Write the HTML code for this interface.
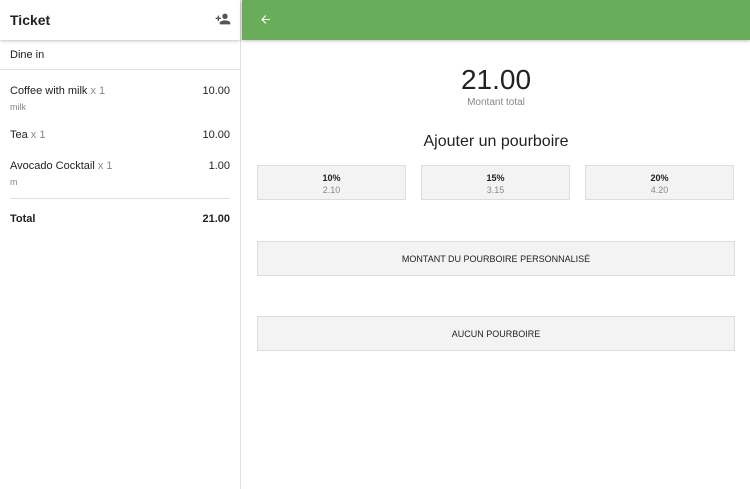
<!DOCTYPE html>
<html><head><meta charset="utf-8"><style>
*{margin:0;padding:0;box-sizing:border-box}
body{width:750px;height:489px;overflow:hidden;font-family:"Liberation Sans",sans-serif;background:#fff;position:relative;color:#222}
.left{position:absolute;left:0;top:0;width:241px;height:489px;border-right:1px solid #e0e0e0;background:#fff}
.lh{height:40px;position:relative;box-shadow:0 1px 3px rgba(0,0,0,.25);z-index:2}
.lh .t{position:absolute;left:10px;top:12px;font-size:14px;font-weight:bold;color:#222}
.dine{height:30px;border-bottom:1px solid #e0e0e0;font-size:11px;padding:9px 10px}
.it{position:absolute;left:10px;right:10px;font-size:11px}
.it .p{position:absolute;right:0;top:0}
.g{color:#888}
.s{color:#888;font-size:9px;margin-top:5px}
.green{position:absolute;left:242px;top:0;right:0;height:40px;background:#69ad5a;box-shadow:0 1px 3px rgba(0,0,0,.25)}
.c{position:absolute;text-align:center;left:242px;right:0}
.b{position:absolute;background:#f3f3f3;border:1px solid #ddd;text-align:center;font-size:9px;color:#222}
</style></head><body>
<div class="left">
<div class="lh"><span class="t">Ticket</span>
<svg style="position:absolute;left:215px;top:12px" width="16" height="14" viewBox="0 0 24 20"><path fill="#555" d="M15 10c2.2 0 4-1.8 4-4s-1.8-4-4-4-4 1.8-4 4 1.8 4 4 4zM6 8V5H4v3H1v2h3v3h2v-3h3V8H6zm9 4c-2.7 0-8 1.3-8 4v2h16v-2c0-2.7-5.3-4-8-4z"/></svg></div>
<div class="dine">Dine in</div>
<div class="it" style="top:85px">Coffee with milk <span class="g">x 1</span><span class="p">10.00</span><div class="s">milk</div></div>
<div class="it" style="top:129px">Tea <span class="g">x 1</span><span class="p">10.00</span></div>
<div class="it" style="top:160px">Avocado Cocktail <span class="g">x 1</span><span class="p">1.00</span><div class="s">m</div></div>
<div style="position:absolute;left:10px;right:10px;top:198px;border-top:1px solid #e0e0e0"></div>
<div class="it" style="top:213px;font-weight:bold;font-size:11px">Total<span class="p">21.00</span></div>
</div>
<div class="green"><svg style="position:absolute;left:17px;top:13px" width="13" height="13" viewBox="0 0 24 24"><path fill="#fff" d="M20 11H7.8l5.6-5.6L12 4l-8 8 8 8 1.4-1.4L7.8 13H20z"/></svg></div>
<div class="c" style="top:64px;font-size:28px;color:#222">21.00</div>
<div class="c" style="top:97px;font-size:10px;color:#888">Montant total</div>
<div class="c" style="top:133px;font-size:16px;color:#222">Ajouter un pourboire</div>
<div class="b" style="left:257px;top:165px;width:149px;height:35px;padding-top:7px"><b>10%</b><div style="color:#888;margin-top:2px">2.10</div></div>
<div class="b" style="left:421px;top:165px;width:149px;height:35px;padding-top:7px"><b>15%</b><div style="color:#888;margin-top:2px">3.15</div></div>
<div class="b" style="left:585px;top:165px;width:149px;height:35px;padding-top:7px"><b>20%</b><div style="color:#888;margin-top:2px">4.20</div></div>
<div class="b" style="left:257px;top:241px;width:478px;height:35px;padding-top:12px">MONTANT DU POURBOIRE PERSONNALISÉ</div>
<div class="b" style="left:257px;top:316px;width:478px;height:35px;padding-top:12px">AUCUN POURBOIRE</div>
</body></html>
